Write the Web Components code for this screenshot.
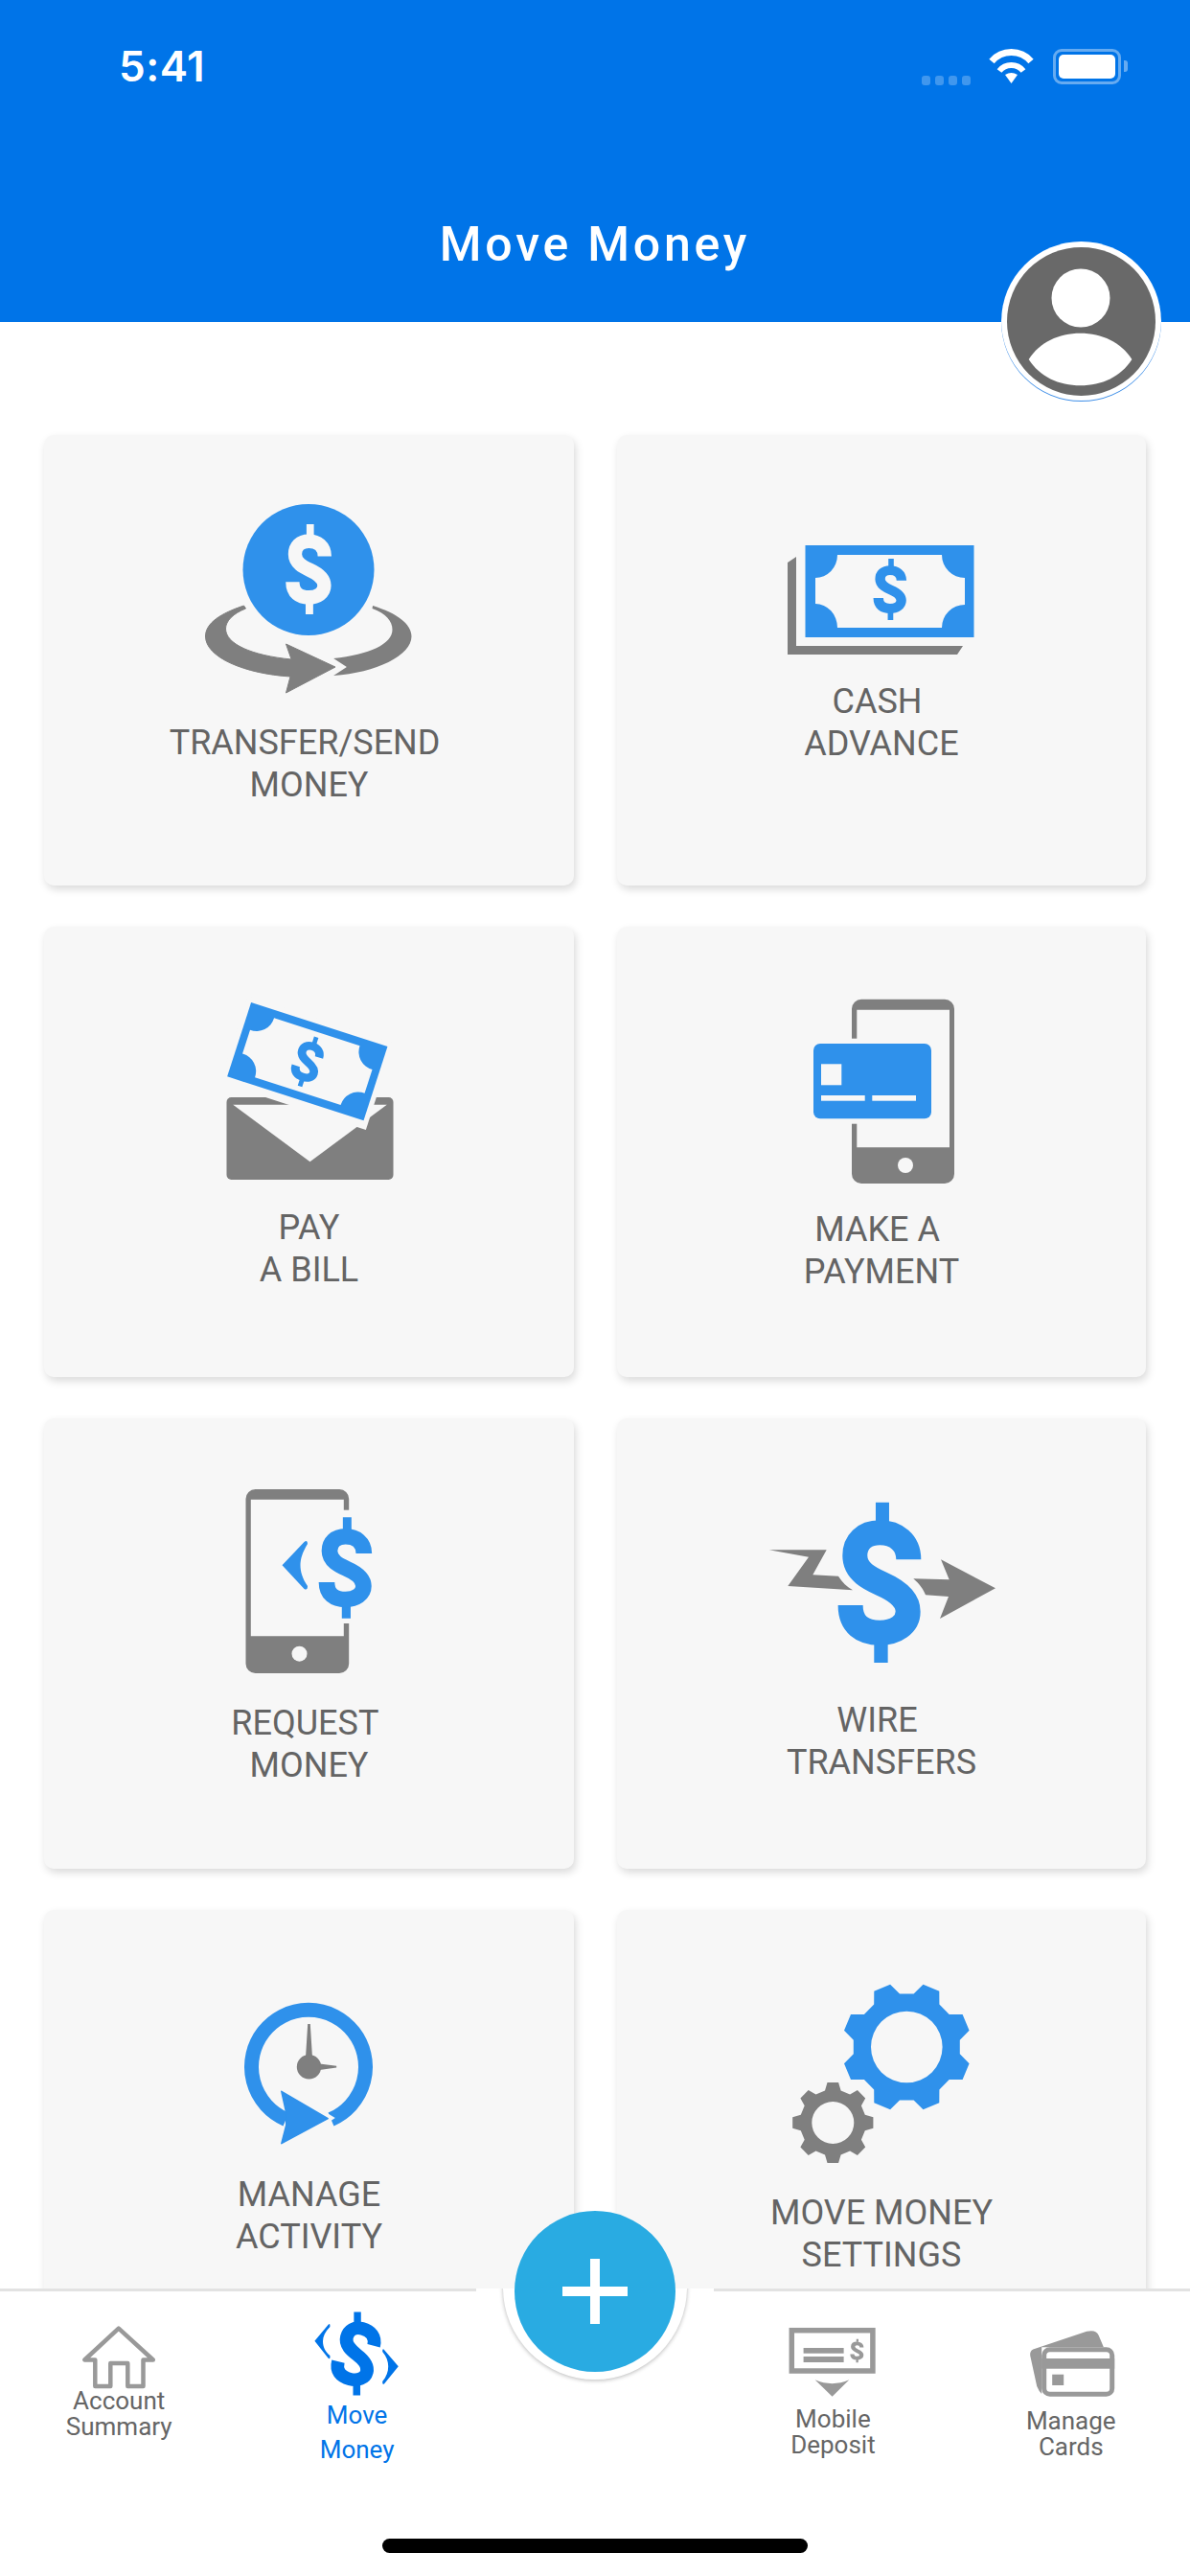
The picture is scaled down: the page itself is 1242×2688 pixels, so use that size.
<!DOCTYPE html>
<html lang="en">
<head>
<meta charset="utf-8">
<title>Move Money</title>
<style>
    html, body { margin: 0; padding: 0; background: #fff; }
</style>
</head>
<body>
<mm-app>
    <mm-header slot="header" heading="Move Money"></mm-header>
    <mm-tile pad="66" gap="23"><mm-icon name="transfer"></mm-icon>TRANSFER/SEND 
MONEY</mm-tile>
    <mm-tile pad="111" gap="20"><mm-icon name="cash"></mm-icon>CASH 
ADVANCE</mm-tile>
    <mm-tile pad="73" gap="24"><mm-icon name="bill"></mm-icon>PAY
A BILL</mm-tile>
    <mm-tile pad="73" gap="21"><mm-icon name="payment"></mm-icon>MAKE A 
PAYMENT</mm-tile>
    <mm-tile pad="70" gap="26"><mm-icon name="request"></mm-icon>REQUEST 
MONEY</mm-tile>
    <mm-tile pad="85" gap="33"><mm-icon name="wire"></mm-icon>WIRE 
TRANSFERS</mm-tile>
    <mm-tile pad="92" gap="28"><mm-icon name="activity"></mm-icon>MANAGE
ACTIVITY</mm-tile>
    <mm-tile pad="72" gap="17"><mm-icon name="settings"></mm-icon>MOVE MONEY
SETTINGS</mm-tile>
    <mm-tabbar slot="footer">
        <mm-tab pad="34" gap="0"><mm-icon name="home"></mm-icon>Account
Summary</mm-tab>
        <mm-tab pad="19" gap="0" active><mm-icon name="move"></mm-icon>Move
Money</mm-tab>
        <span></span>
        <mm-tab pad="36" gap="9"><mm-icon name="deposit"></mm-icon>Mobile
Deposit</mm-tab>
        <mm-tab pad="39" gap="10"><mm-icon name="cards"></mm-icon>Manage
Cards</mm-tab>
    </mm-tabbar>
</mm-app>

<script>
const BLUE = '#2f91eb';
const GREY = '#7f7f7f';
const TILE = '#f7f7f7';
const NAV = '#999999';

// $ drawn as a stroked S with two bars, box is 267x502 before scaling
function dollar(x, y, w, h, color, tilt = 0) {
    const s = 'M225 179C225 125 185 95 135 95C85 95 57 125 57 167C57 217 105 239 140 255C185 275 223 302 223 342C223 382 185 408 135 408C80 408 43 382 43 322';
    return `<g transform="translate(${x} ${y}) scale(${w / 267} ${h / 502})">
        <path d="M122 0h42v64h-42zM117 438h43v64h-43z" fill="${color}"/>
        <path d="${s}" fill="none" stroke="${color}" stroke-width="78" transform="rotate(${tilt} 133 251)"/>
    </g>`;
}

function gear(cx, cy, teeth, rBase, rTip, baseHalf, tipHalf, phase, rHole, color) {
    const pt = (r, deg) => {
        const a = (deg - 90) * Math.PI / 180;
        return (cx + r * Math.cos(a)).toFixed(1) + ' ' + (cy + r * Math.sin(a)).toFixed(1);
    };
    let d = '';
    for (let i = 0; i < teeth; i++) {
        const c = phase + i * 360 / teeth;
        d += (i ? 'L' : 'M') + pt(rBase, c - baseHalf) + 'L' + pt(rTip, c - tipHalf) + 'L' + pt(rTip, c + tipHalf) + 'L' + pt(rBase, c + baseHalf);
    }
    d += `ZM${cx - rHole} ${cy}a${rHole} ${rHole} 0 1 0 ${rHole * 2} 0a${rHole} ${rHole} 0 1 0 ${-rHole * 2} 0Z`;
    return `<path d="${d}" fill="${color}" fill-rule="evenodd"/>`;
}

// every icon is drawn in page pixels, box = x y w h of the reference
const ICONS = {
    transfer: {
        box: [192.5, 520, 260, 210],
        draw: `<circle cx="321.5" cy="594.5" r="68.5" fill="${BLUE}"/>
            ${dollar(297, 547, 49, 94, TILE)}
            <path fill="${GREY}" stroke="${GREY}" stroke-width="1" stroke-linejoin="round" d="M254 632C230 640 214 650 214 664C214 686 255 703 302.5 706L298 723L349.5 696L298 672L303.6 688C262 684 235 672 235 656C235 648 243 640 256 635Z"/>
            <path fill="${GREY}" d="M388.6 632C414 640 429 651 429 664C429 684 392 702 347.6 705L361.4 696L347.6 687C385 683 409 672 409 657C409 648 402 640 388 635Z"/>`
    },
    cash: {
        box: [790, 565, 260, 125],
        draw: `<path fill="${GREY}" d="M822 587L831 581V674H1005L999 683H822Z"/>
            <rect x="840.5" y="569" width="176" height="96" fill="${BLUE}"/>
            <path fill="${TILE}" d="M874 579H983A24 24 0 0 0 1007 603V631A24 24 0 0 0 983 655H874A23 25 0 0 0 851 630V603A23 24 0 0 0 874 579Z"/>
            ${dollar(911, 583, 35.5, 64, BLUE)}`
    },
    bill: {
        box: [192.5, 1040, 260, 195],
        draw: `<rect x="236" y="1145" width="174" height="86" rx="5" fill="${GREY}"/>
            <path fill="${TILE}" d="M242.7 1152.7H403.3L323 1212.3Z"/>
            <g transform="translate(320.3 1107.7) rotate(17.9)">
                <rect x="-80" y="-46" width="160" height="95" fill="${TILE}"/>
                <rect x="-74.8" y="-40.6" width="149.6" height="81.2" fill="${BLUE}"/>
                <path fill="${TILE}" d="M-47 -32.5H47A19 19 0 0 0 67 -13V13A19 19 0 0 0 47 32.5H-47A19 19 0 0 0 -67 13V-13A19 19 0 0 0 -47 -32.5Z"/>
                ${dollar(-15, -27, 30, 54, BLUE)}
            </g>`
    },
    payment: {
        box: [790, 1040, 260, 200],
        draw: `<path fill="${GREY}" fill-rule="evenodd" d="M899 1042.7H986A10 10 0 0 1 996 1052.7V1225A10 10 0 0 1 986 1235H899A10 10 0 0 1 889 1225V1052.7A10 10 0 0 1 899 1042.7ZM894.3 1053.7V1197.3H991V1053.7Z"/>
            <circle cx="945" cy="1216" r="8" fill="${TILE}"/>
            <rect x="880" y="1083.7" width="20" height="89" fill="${TILE}"/>
            <rect x="849" y="1089" width="123" height="78.3" rx="7" fill="${BLUE}"/>
            <rect x="857" y="1110.3" width="21.3" height="22" fill="${TILE}"/>
            <rect x="857" y="1143" width="45.7" height="5.7" fill="${TILE}"/>
            <rect x="910.3" y="1143" width="45.7" height="5.7" fill="${TILE}"/>`
    },
    request: {
        box: [192.5, 1550, 260, 200],
        draw: `<path fill="${GREY}" fill-rule="evenodd" d="M266 1554H353.7A10 10 0 0 1 363.7 1564V1736A10 10 0 0 1 353.7 1746H266A10 10 0 0 1 256 1736V1564A10 10 0 0 1 266 1554ZM261.3 1564.7V1707.3H358.3V1564.7Z"/>
            <circle cx="312" cy="1725.7" r="8" fill="${TILE}"/>
            <rect x="350" y="1575.7" width="20" height="118.3" fill="${TILE}"/>
            ${dollar(331.3, 1583.3, 57, 105.4, BLUE)}
            <path fill="${BLUE}" d="M294 1633.3L317 1609Q320.5 1606.5 320.5 1611C315 1620 313 1627 313 1633.3C313 1640 315 1647 320.5 1655Q320.5 1660 317 1658Z"/>`
    },
    wire: {
        box: [790, 1565, 260, 175],
        draw: `<path fill="${GREY}" d="M802.7 1617.3H862.7L848.3 1643.3L875 1644.7C879 1651 884 1656 890 1659.3L822.3 1655L844 1624.7Z"/>
            <path fill="${GREY}" d="M953.3 1647.3L990.7 1648.3L982 1627.3L1039 1657.3L981 1689L990 1666L966 1664.3C964 1659 960 1653 953.3 1647.3Z"/>
            ${dollar(873.3, 1567.7, 89, 167.3, BLUE)}`
    },
    activity: {
        box: [192.5, 2085, 260, 155],
        draw: `<path fill="none" stroke="${BLUE}" stroke-width="15" d="M298 2211.5A59.5 59.5 0 1 1 345 2211.5"/>
            <path fill="${TILE}" d="M341 2205L349.3 2210L331.7 2222.3L352 2232L300 2240L300 2195L341 2195Z"/>
            <path fill="${BLUE}" stroke="${BLUE}" stroke-width="1.5" stroke-linejoin="round" d="M293.3 2182.3L341.7 2210.7L293.3 2236.7L298.3 2217.3L297.7 2202.3Z"/>
            <circle cx="322" cy="2156.7" r="12.7" fill="${GREY}"/>
            <path fill="${GREY}" d="M320.7 2112H323.3L325.5 2147H318.5ZM333 2153.5L350.7 2155.8V2157.5L333 2160Z"/>`
    },
    settings: {
        box: [790, 2065, 260, 205],
        draw: gear(946.3, 2136, 8, 56, 67.5, 15, 7.75, 22.5, 37.3, BLUE) + gear(869.3, 2215, 8, 34.5, 42.5, 14, 7.9, 0, 22, GREY)
    },
    home: {
        box: [64.2, 2425, 120, 67],
        draw: `<path fill="none" stroke="${NAV}" stroke-width="4.5" stroke-linejoin="round" d="M124 2429.7L88.5 2462.5H99.5V2490H115.5V2466H133.5V2490H149.7V2462.5H160Z"/>`
    },
    move: {
        box: [312.6, 2410, 120, 92],
        draw: `${dollar(347.5, 2412.5, 47, 87, '#0074e8', 14)}
            <path fill="#0074e8" d="M328 2442.7L342 2426Q344.5 2423.5 344 2428C339 2433 336.6 2438 336.6 2443C336.6 2449 339 2454 344 2458Q344.5 2463 342 2460.5Z"/>
            <path fill="#0074e8" d="M415.4 2469.3L401 2452.5Q398.5 2449.5 398.8 2454C403 2459 404.8 2464 404.8 2469.3C404.8 2475 403 2480 398.8 2485Q398.5 2489.5 401 2487Z"/>`
    },
    deposit: {
        box: [809.4, 2427, 120, 75],
        draw: `<rect x="826.7" y="2431.7" width="84.6" height="42.3" fill="none" stroke="${NAV}" stroke-width="5.5"/>
            <rect x="839" y="2450" width="42" height="5.7" fill="${NAV}"/>
            <rect x="839" y="2459" width="42" height="6" fill="${NAV}"/>
            ${dollar(887.5, 2440.7, 14.5, 24.5, NAV)}
            <path fill="${NAV}" d="M851 2483.3Q869 2491 886.7 2483.3L869 2500.7Z"/>`
    },
    cards: {
        box: [1057.8, 2430, 120, 73],
        draw: `<path fill="${NAV}" d="M1078 2451.5L1134 2432.8Q1144 2430.5 1146.5 2437L1151.7 2449.3H1087V2498Q1084 2495 1082 2490L1075 2458Q1074.5 2453 1078 2451.5Z"/>
            <rect x="1089.5" y="2451.8" width="71" height="46.4" rx="6" fill="#fff" stroke="${NAV}" stroke-width="5"/>
            <rect x="1087" y="2461" width="76" height="10.7" fill="${NAV}"/>
            <rect x="1098" y="2477.7" width="12" height="11.3" fill="${NAV}"/>`
    }
};

class MmIcon extends HTMLElement {
    constructor() {
        super();
        this.attachShadow({ mode: 'open' });
    }

    connectedCallback() {
        const icon = ICONS[this.getAttribute('name')];
        const [x, y, w, h] = icon.box;
        this.shadowRoot.innerHTML = `
            <style>
                :host { display: block; width: ${w}px; height: ${h}px; }
                svg { display: block; overflow: visible; }
            </style>
            <svg width="${w}" height="${h}" viewBox="${x} ${y} ${w} ${h}" aria-hidden="true">${icon.draw}</svg>
        `;
    }
}

class MmAvatar extends HTMLElement {
    constructor() {
        super();
        this.attachShadow({ mode: 'open' });
        this.shadowRoot.innerHTML = `
            <style>
                :host {
                    display: block;
                    width: 167px;
                    height: 167px;
                    border-radius: 50%;
                    background: #fff;
                    box-shadow: inset 0 -1px 0 0 #3f8fe8;
                }
                svg { display: block; }
            </style>
            <svg width="167" height="167" viewBox="1045 252 167 167" aria-hidden="true">
                <circle cx="1128.5" cy="335.4" r="77.5" fill="#696969"/>
                <circle cx="1128" cy="311" r="30.5" fill="#fff"/>
                <path fill="#fff" d="M1073.7 375C1085 357 1105 347.7 1127.6 347.7C1150 347.7 1170 357 1181.4 375C1170 393 1150 402.3 1127.6 402.3C1105 402.3 1085 393 1073.7 375Z"/>
            </svg>
        `;
    }
}

class MmHeader extends HTMLElement {
    constructor() {
        super();
        this.attachShadow({ mode: 'open' });
    }

    connectedCallback() {
        this.shadowRoot.innerHTML = `
            <style>
                :host {
                    display: block;
                    position: relative;
                    height: 336px;
                    box-sizing: border-box;
                    padding-top: 46px;
                    background: #0074e8;
                    color: #fff;
                    z-index: 2;
                }
                .status {
                    display: flex;
                    align-items: center;
                    height: 46px;
                    padding: 0 65px 0 124px;
                }
                .time {
                    flex: 1;
                    font: 600 44px/46px Inter, "Liberation Sans", sans-serif;
                    letter-spacing: .5px;
                }
                .dots { display: flex; gap: 5px; margin: 29px 19px 0 0; }
                .dots i { width: 9px; height: 10px; border-radius: 3px; background: rgba(255,255,255,.25); }
                .battery { display: flex; align-items: center; margin-left: 20px; }
                .shell {
                    box-sizing: border-box;
                    width: 71px;
                    height: 37px;
                    padding: 3px;
                    border: 3px solid rgba(255,255,255,.4);
                    border-radius: 9px;
                }
                .shell i { display: block; height: 100%; border-radius: 5px; background: #fff; }
                .cap { width: 4px; height: 12px; margin-left: 3px; border-radius: 0 3px 3px 0; background: rgba(255,255,255,.4); }
                h1 {
                    margin: 133px 0 0;
                    text-align: center;
                    font: 500 50px/60px Roboto, "Liberation Sans", sans-serif;
                    letter-spacing: 3.8px;
                }
                mm-avatar { position: absolute; left: 1045px; top: 252px; }
            </style>
            <div class="status">
                <span class="time">5:41</span>
                <span class="dots"><i></i><i></i><i></i><i></i></span>
                <svg width="47" height="36" viewBox="1032 49 47 36" aria-hidden="true">
                    <path fill="none" stroke="#fff" stroke-width="7" d="M1035 62A27 27 0 0 1 1076 62"/>
                    <path fill="none" stroke="#fff" stroke-width="6" d="M1043 72A16 16 0 0 1 1068 72"/>
                    <path fill="#fff" d="M1055.5 85L1049 76Q1055.5 72 1062 76Z"/>
                </svg>
                <span class="battery"><span class="shell"><i></i></span><span class="cap"></span></span>
            </div>
            <h1>${this.getAttribute('heading')}</h1>
            <mm-avatar></mm-avatar>
        `;
    }
}

class MmTile extends HTMLElement {
    constructor() {
        super();
        this.attachShadow({ mode: 'open' });
    }

    connectedCallback() {
        this.shadowRoot.innerHTML = `
            <style>
                :host {
                    display: flex;
                    flex-direction: column;
                    align-items: center;
                    height: 470px;
                    box-sizing: border-box;
                    padding-top: ${this.getAttribute('pad')}px;
                    border-radius: 10px;
                    background: ${TILE};
                    box-shadow: 2px 4px 8px rgba(0,0,0,.15);
                    color: #646464;
                    text-align: center;
                    font: 400 36px/44px Roboto, "Liberation Sans", sans-serif;
                }
                .gap { height: ${this.getAttribute('gap')}px; }
                .label { white-space: pre; }
                ::slotted(mm-icon) { flex: none; }
            </style>
            <slot name="icon"></slot>
            <div class="gap"></div>
            <div class="label"><slot></slot></div>
        `;
        this.querySelector('mm-icon').slot = 'icon';
    }
}

class MmTab extends HTMLElement {
    constructor() {
        super();
        this.attachShadow({ mode: 'open' });
    }

    connectedCallback() {
        const active = this.hasAttribute('active');
        this.shadowRoot.innerHTML = `
            <style>
                :host {
                    display: flex;
                    flex-direction: column;
                    align-items: center;
                    padding-top: ${this.getAttribute('pad')}px;
                    color: ${active ? '#0074e8' : '#666'};
                    text-align: center;
                    font: 400 26px/${active ? 36 : 27}px Roboto, "Liberation Sans", sans-serif;
                }
                .gap { height: ${this.getAttribute('gap')}px; }
                .label { white-space: pre; }
            </style>
            <slot name="icon"></slot>
            <div class="gap"></div>
            <div class="label"><slot></slot></div>
        `;
        this.querySelector('mm-icon').slot = 'icon';
    }
}

class MmTabbar extends HTMLElement {
    constructor() {
        super();
        this.attachShadow({ mode: 'open' });
        this.shadowRoot.innerHTML = `
            <style>
                :host {
                    display: flex;
                    flex-direction: column;
                    align-items: center;
                    position: relative;
                    height: 300px;
                    box-sizing: border-box;
                    border-top: 3px solid #e2e2e2;
                    background: #fff;
                }
                .tabs {
                    flex: 1;
                    width: 100%;
                    display: grid;
                    grid-template-columns: repeat(5, 1fr);
                    position: relative;
                }
                .indicator {
                    width: 444px;
                    height: 15px;
                    margin-bottom: 24px;
                    border-radius: 8px;
                    background: #000;
                }
                .well {
                    position: absolute;
                    left: 497px;
                    top: -3px;
                    width: 248px;
                    height: 104px;
                    overflow: hidden;
                    background: #fff;
                }
                .well i {
                    position: absolute;
                    left: 28px;
                    top: -97px;
                    width: 192px;
                    height: 192px;
                    border-radius: 50%;
                    background: #fff;
                    box-shadow: 0 1px 4px rgba(0,0,0,.28);
                }
                .fab {
                    position: absolute;
                    left: 537px;
                    top: -84px;
                    width: 168px;
                    height: 168px;
                    border-radius: 50%;
                    background: #29abe2;
                }
                .fab::before, .fab::after {
                    content: "";
                    position: absolute;
                    background: #fff;
                }
                .fab::before { left: 50px; top: 79px; width: 68px; height: 10px; }
                .fab::after { left: 79px; top: 50px; width: 10px; height: 68px; }
            </style>
            <div class="well"><i></i></div>
            <div class="tabs"><slot></slot></div>
            <div class="indicator"></div>
            <div class="fab"></div>
        `;
    }
}

class MmApp extends HTMLElement {
    constructor() {
        super();
        this.attachShadow({ mode: 'open' });
        this.shadowRoot.innerHTML = `
            <style>
                :host {
                    display: flex;
                    flex-direction: column;
                    width: 1242px;
                    height: 2688px;
                    overflow: hidden;
                    background: #fff;
                }
                main {
                    flex: 1;
                    min-height: 0;
                    overflow: hidden;
                    box-sizing: border-box;
                    padding: 118px 46px 0;
                }
                .grid {
                    display: grid;
                    grid-template-columns: 553px 552px;
                    column-gap: 45px;
                    row-gap: 43px;
                }
                ::slotted([slot="footer"]) { z-index: 3; }
            </style>
            <slot name="header"></slot>
            <main><div class="grid"><slot></slot></div></main>
            <slot name="footer"></slot>
        `;
    }
}

customElements.define('mm-icon', MmIcon);
customElements.define('mm-avatar', MmAvatar);
customElements.define('mm-header', MmHeader);
customElements.define('mm-tile', MmTile);
customElements.define('mm-tab', MmTab);
customElements.define('mm-tabbar', MmTabbar);
customElements.define('mm-app', MmApp);
</script>
</body>
</html>
